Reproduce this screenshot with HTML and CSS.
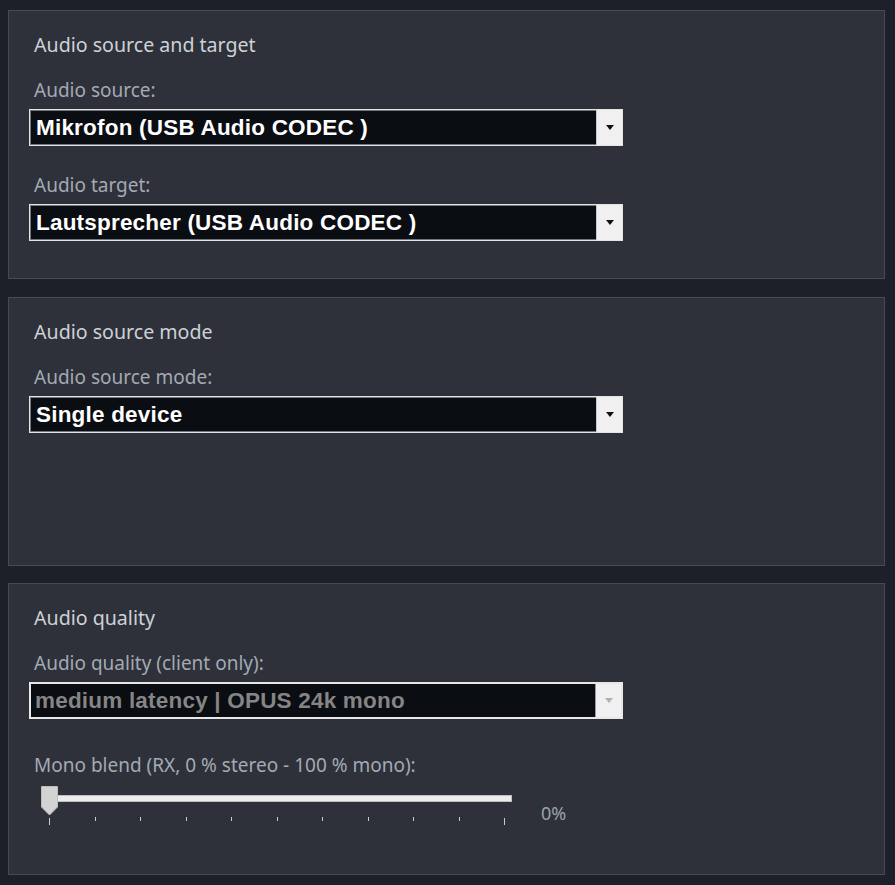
FILE: index.html
```html
<!DOCTYPE html>
<html lang="en">
<head>
    <meta charset="UTF-8" />
    <meta name="viewport" content="width=device-width, initial-scale=1.0" />
    <title>Audio settings</title>
    <link rel="stylesheet" href="styles.css">
</head>
<body>
    <div class="panel">
        <h2>Audio source and target</h2>
        <label>Audio source:</label>
        <div class="select">
            <span class="value">Mikrofon (USB Audio CODEC )</span>
            <span class="arrow"><i></i></span>
        </div>
        <label class="spaced">Audio target:</label>
        <div class="select">
            <span class="value">Lautsprecher (USB Audio CODEC )</span>
            <span class="arrow"><i></i></span>
        </div>
    </div>

    <div class="panel">
        <h2>Audio source mode</h2>
        <label>Audio source mode:</label>
        <div class="select">
            <span class="value">Single device</span>
            <span class="arrow"><i></i></span>
        </div>
    </div>

    <div class="panel tall">
        <h2>Audio quality</h2>
        <label>Audio quality (client only):</label>
        <div class="select disabled">
            <span class="value">medium latency | OPUS 24k mono</span>
            <span class="arrow"><i></i></span>
        </div>
        <label class="spaced wide">Mono blend (RX, 0 % stereo - 100 % mono):</label>
        <div class="slider-row">
            <div class="slider">
                <div class="track"></div>
                <svg class="thumb" width="17" height="30" viewBox="0 0 17 30">
                    <polygon points="0.5,0.5 16.5,0.5 16.5,21 8.5,29 0.5,21" fill="#d3d3d3" stroke="#bdbdbd" />
                </svg>
                <div class="ticks">
                    <span class="end"></span><span></span><span></span><span></span><span></span><span></span>
                    <span></span><span></span><span></span><span></span><span class="end"></span>
                </div>
            </div>
            <span class="slider-value">0%</span>
        </div>
    </div>
</body>
</html>
```

FILE: styles.css
```css
* {
    margin: 0;
    padding: 0;
    box-sizing: border-box;
}

body {
    font-family: "Noto Sans", "Open Sans", sans-serif;
    background-color: #1e2029;
    padding: 10px 10px 0 8px;
}

.panel {
    width: 877px;
    height: 269px;
    background-color: #2e313a;
    border: 1px solid #464a53;
    padding: 20px 0 0 20px;
    margin-bottom: 18px;
}

.panel.tall {
    height: 292px;
    margin-bottom: 0;
}

.panel + .panel.tall {
    margin-top: -1px;
}

.panel h2 {
    font-size: 19.6px;
    font-weight: normal;
    line-height: 28px;
    color: #cdd1d7;
    padding-left: 5px;
}

.panel label {
    display: block;
    font-size: 19px;
    line-height: 28px;
    color: #a3aab4;
    padding-left: 5px;
    margin-top: 17px;
    margin-bottom: 5px;
}

.panel label.spaced {
    margin-top: 25px;
}

.panel label.wide {
    margin-top: 32px;
}

.select {
    display: flex;
    width: 594px;
    height: 37px;
    border: 1px solid #e4e4e4;
    background-color: #0a0d12;
}

.select .value {
    flex: 1;
    border: 1px solid #73767c;
    border-right: none;
    padding-left: 5px;
    font-family: "Liberation Sans", Arial, sans-serif;
    font-weight: bold;
    font-size: 22.5px;
    letter-spacing: 0.2px;
    line-height: 33px;
    color: #ffffff;
}

.select .arrow {
    width: 26px;
    background-color: #f0f0f0;
    border-left: 1px solid #c8c8c8;
    display: flex;
    align-items: center;
    justify-content: center;
}

.select .arrow i {
    width: 0;
    height: 0;
    border-left: 4px solid transparent;
    border-right: 4px solid transparent;
    border-top: 5px solid #111;
}

.select.disabled {
    border: 2px solid #e8e8e8;
    height: 37px;
}

.select.disabled .value {
    color: #858585;
    border: none;
    line-height: 33px;
    padding-left: 4px;
}

.select.disabled .arrow {
    border-left: 1px solid #9b9b9b;
}

.select.disabled .arrow i {
    border-top-color: #b0b0b0;
}

.slider-row {
    display: flex;
    align-items: flex-start;
    padding-left: 12px;
    margin-top: 10px;
}

.slider {
    position: relative;
    width: 471px;
    padding-top: 6px;
}

.track {
    height: 7px;
    background-color: #ececec;
    border: 1px solid #bfbfbf;
}

.thumb {
    position: absolute;
    left: 0;
    top: -3px;
}

.ticks {
    display: flex;
    justify-content: space-between;
    padding: 0 7px 0 8px;
    margin-top: 15px;
}

.ticks span {
    width: 1px;
    height: 4px;
    background-color: #c9ccd1;
}

.ticks span.end {
    height: 7px;
    margin-top: 1px;
}

.slider-value {
    font-size: 18px;
    color: #9aa3ae;
    margin-left: 29px;
    margin-top: 13px;
    line-height: 22px;
}
```
